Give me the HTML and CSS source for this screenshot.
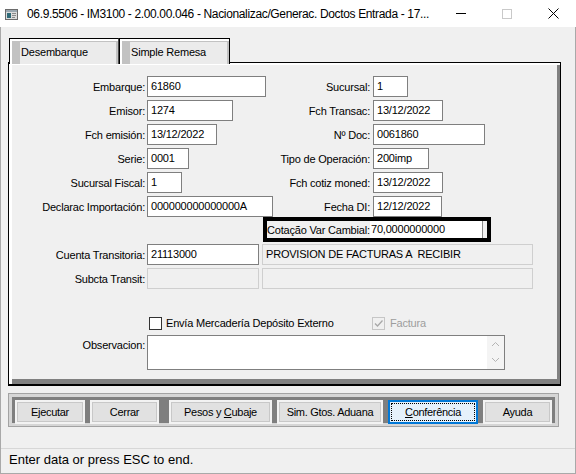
FILE: index.html
```html
<!DOCTYPE html>
<html>
<head>
<meta charset="utf-8">
<link rel="stylesheet" href="styles.css">
</head>
<body>
<div class="window">
  <div class="titlebar">
    <svg class="app-icon" width="13" height="11" viewBox="0 0 13 11">
      <rect x="0.5" y="0.5" width="12" height="10" fill="#dcdcdc" stroke="#6b6b6b"/>
      <rect x="1" y="1" width="11" height="2" fill="#9aa7b0"/>
      <rect x="2" y="4" width="4" height="5" fill="#2e6a78"/>
      <rect x="7" y="4" width="4" height="1" fill="#8a8a8a"/>
      <rect x="7" y="6" width="4" height="1" fill="#8a8a8a"/>
      <rect x="7" y="8" width="3" height="1" fill="#8a8a8a"/>
    </svg>
    <span class="title">06.9.5506 - IM3100 - 2.00.00.046 - Nacionalizac/Generac. Doctos Entrada - 17...</span>
    <div class="controls">
      <span class="ctl"><span class="min-line"></span></span>
      <span class="ctl"><span class="max-box"></span></span>
      <span class="ctl">
        <svg width="11" height="11" viewBox="0 0 11 11"><path d="M0.5 0.5 L10.5 10.5 M10.5 0.5 L0.5 10.5" stroke="#000" stroke-width="1"/></svg>
      </span>
    </div>
  </div>

  <div class="client">
    <div class="tabs">
      <div class="tab"><span>Desembarque</span></div>
      <div class="tab tab-2"><span>Simple Remesa</span></div>
    </div>

    <div class="panel">
      <div class="row">
        <span class="lbl">Embarque:</span>
        <span class="inp w119">61860</span>
        <span class="lbl2">Sucursal:</span>
        <span class="inp w35">1</span>
      </div>
      <div class="row">
        <span class="lbl">Emisor:</span>
        <span class="inp w86">1274</span>
        <span class="lbl2">Fch Transac:</span>
        <span class="inp w70">13/12/2022</span>
      </div>
      <div class="row">
        <span class="lbl">Fch emisión:</span>
        <span class="inp w70">13/12/2022</span>
        <span class="lbl2">Nº Doc:</span>
        <span class="inp w112">0061860</span>
      </div>
      <div class="row">
        <span class="lbl">Serie:</span>
        <span class="inp w42">0001</span>
        <span class="lbl2">Tipo de Operación:</span>
        <span class="inp w56">200imp</span>
      </div>
      <div class="row">
        <span class="lbl">Sucursal Fiscal:</span>
        <span class="inp w35">1</span>
        <span class="lbl2">Fch cotiz moned:</span>
        <span class="inp w70">13/12/2022</span>
      </div>
      <div class="row row-last">
        <span class="lbl">Declarac Importación:</span>
        <span class="inp w126">000000000000000A</span>
        <span class="lbl2">Fecha DI:</span>
        <span class="inp w69">12/12/2022</span>
      </div>
      <div class="row row-cot">
        <div class="cot-box">
          <span class="cot-lbl">Cotação Var Cambial:</span>
          <span class="cot-inp">70,0000000000</span>
        </div>
      </div>
      <div class="row row-cta">
        <span class="lbl">Cuenta Transitoria:</span>
        <span class="inp w112">21113000</span>
        <span class="inp dis w271 wide">PROVISION DE FACTURAS A  RECIBIR</span>
      </div>
      <div class="row">
        <span class="lbl">Subcta Transit:</span>
        <span class="inp dis w112"></span>
        <span class="inp dis w271 wide"></span>
      </div>
      <div class="row row-chk">
        <span class="chk-cell">
          <span class="chk"></span>
          <span class="chk-text">Envía Mercadería Depósito Externo</span>
        </span>
        <span class="chk-cell chk-right">
          <span class="chk chk-dis">
            <svg width="11" height="11" viewBox="0 0 11 11"><path d="M2 5.5 L4.5 8 L9.5 2.5" fill="none" stroke="#a8a8a8" stroke-width="1.3"/></svg>
          </span>
          <span class="chk-text dis-text">Factura</span>
        </span>
      </div>
      <div class="row row-obs">
        <span class="lbl lbl-top">Observacion:</span>
        <div class="memo">
          <div class="memo-text"></div>
          <div class="memo-scroll">
            <svg width="9" height="6" viewBox="0 0 9 6"><path d="M1 5 L4.5 1.5 L8 5" fill="none" stroke="#b4b4b4" stroke-width="1"/></svg>
            <svg width="9" height="6" viewBox="0 0 9 6"><path d="M1 1 L4.5 4.5 L8 1" fill="none" stroke="#b4b4b4" stroke-width="1"/></svg>
          </div>
        </div>
      </div>
    </div>

    <div class="btnbar">
      <button class="btn w70">Ejecutar</button>
      <button class="btn w69">Cerrar</button>
      <button class="btn w103 btn-gap">Pesos y <u>C</u>ubaje</button>
      <button class="btn w106">Sim. Gtos. Aduana</button>
      <button class="btn w90 btn-focus"><span class="focus-ring"><u>C</u>onferência</span></button>
      <button class="btn w69">Ayuda</button>
    </div>

    <div class="status">Enter data or press ESC to end.</div>
  </div>
</div>
</body>
</html>
```
FILE: styles.css
```css
* { box-sizing: border-box; }
html, body { margin: 0; padding: 0; }
body {
  width: 576px;
  height: 474px;
  overflow: hidden;
  background: #f0f0f0;
  font-family: "Liberation Sans", Arial, sans-serif;
}
.window {
  width: 576px;
  height: 474px;
  display: flex;
  flex-direction: column;
}
.titlebar {
  height: 27px;
  background: #fff;
  display: flex;
  align-items: center;
  flex: none;
}
.app-icon { margin-left: 5px; margin-top: 1px; flex: none; }
.title {
  margin-left: 9px;
  font-size: 12px;
  letter-spacing: -0.35px;
  color: #000;
  white-space: nowrap;
  flex: 1;
}
.controls { display: flex; height: 27px; flex: none; }
.ctl {
  width: 46px;
  height: 27px;
  display: flex;
  align-items: center;
  justify-content: center;
}
.min-line { width: 10px; height: 1px; background: #000; }
.max-box { width: 10px; height: 10px; border: 1px solid #c9c9c9; }

.client {
  flex: 1;
  background: #f0f0f0;
  border-left: 1px solid #a9a9a9;
  border-right: 1px solid #a9a9a9;
  border-bottom: 1px solid #a9a9a9;
  display: flex;
  flex-direction: column;
}

/* tabs */
.tabs {
  display: flex;
  margin: 11px 0 0 8px;
  height: 26px;
  position: relative;
  z-index: 1;
}
.tab {
  height: 26px;
  border: 1px solid #000;
  border-bottom: 0;
  border-right-color: #4a4a4a;
  background: #c2c2c2;
  box-shadow: inset 2px 2px 0 #fff;
  padding: 3px 2px 0 10px;
  font-size: 11px;
  letter-spacing: -0.2px;
}
.tab span {
  display: block;
  height: 100%;
  background: #ebebeb;
  line-height: 21px;
  padding-left: 1px;
}
.tab:first-child { width: 110px; }
.tab-2 { width: 111px; margin-left: 0; border-right-color: #000; }

/* panel */
.panel {
  margin: -2px 0 0 7px;
  width: 553px;
  height: 324px;
  flex: none;
  border: 1px solid #000;
  border-bottom-width: 2px;
  box-shadow: inset 3px 2px 0 #fff, inset -3px -5px 0 #808080;
  padding-top: 13px;
  font-size: 11px;
  letter-spacing: -0.2px;
  color: #000;
}
.row {
  display: grid;
  grid-template-columns: 138px 116px 110px auto;
  align-items: center;
  height: 21px;
  margin-bottom: 3px;
  white-space: nowrap;
}
.row-last { margin-bottom: 0; }
.lbl { text-align: right; padding-right: 2px; }
.lbl2 { text-align: right; padding-right: 3px; }
.inp {
  display: block;
  height: 21px;
  line-height: 19px;
  background: #fff;
  border: 1px solid #7f7f7f;
  padding-left: 3px;
  overflow: visible;
  white-space: pre;
}
.dis { background: #f0f0f0; border-color: #cfcfcf; }
.wide { grid-column: 3 / 5; margin-left: -1px; }
.w35 { width: 35px; }
.w42 { width: 42px; }
.w56 { width: 56px; }
.w69 { width: 69px; }
.w70 { width: 70px; }
.w86 { width: 86px; }
.w112 { width: 112px; }
.w119 { width: 119px; }
.w126 { width: 126px; }
.w271 { width: 271px; }

.row-cot { height: 25px; margin-bottom: 2px; }
.cot-box {
  grid-column: 3 / 5;
  display: flex;
  align-items: center;
  width: 228px;
  height: 25px;
  border: 4px solid #000;
  background: #f0f0f0;
}
.cot-lbl { width: 103px; text-align: right; padding-right: 3px; }
.cot-inp {
  width: 113px;
  height: 17px;
  line-height: 17px;
  background: #fff;
  border-right: 1px solid #8a8a8a;
  padding-left: 1px;
}

.row-chk { margin-top: 27px; height: 14px; margin-bottom: 5px; }
.chk-cell {
  grid-column: 2;
  display: flex;
  align-items: center;
  padding-left: 2px;
}
.chk-right { grid-column: 4; margin-left: -1px; padding-left: 0; }
.chk {
  width: 13px;
  height: 13px;
  border: 1px solid #333;
  background: #fff;
  display: flex;
  align-items: center;
  justify-content: center;
  flex: none;
}
.chk-dis { border-color: #c6c6c6; background: #f0f0f0; }
.chk-text { margin-left: 4px; }
.dis-text { color: #9d9d9d; margin-left: 5px; }

.row-obs { height: 35px; align-items: start; }
.lbl-top { padding-top: 4px; }
.memo {
  grid-column: 2 / 5;
  width: 358px;
  height: 35px;
  background: #fff;
  border: 1px solid #7f7f7f;
  display: flex;
}
.memo-text { flex: 1; }
.memo-scroll {
  width: 17px;
  background: #f4f4f4;
  display: flex;
  flex-direction: column;
  align-items: center;
  justify-content: space-between;
  padding: 5px 0 6px;
}

/* button bar */
.btnbar {
  margin: 7px 0 0 7px;
  width: 551px;
  height: 34px;
  flex: none;
  background: #7f7f7f;
  border: 1px solid #a3a3a3;
  box-shadow: inset 0 0 0 3px #d6d6d6;
  display: flex;
  gap: 5px;
  padding: 6px 0 2px 6px;
}
.btn {
  height: 24px;
  background: #e1e1e1;
  border: 2px solid #f3f3f3;
  box-shadow: inset 0 0 0 1px #c8c8c8;
  font-family: "Liberation Sans", Arial, sans-serif;
  font-size: 11px;
  letter-spacing: -0.3px;
  color: #000;
  padding: 0;
  flex: none;
}
.w90 { width: 90px; }
.w103 { width: 103px; }
.w106 { width: 106px; }
.btn-gap { margin-left: 5px; }
.btn-focus {
  background: #e5f1fb;
  border: 1px solid #0078d7;
  box-shadow: inset 0 0 0 1px #0078d7;
  padding: 2px;
}
.focus-ring {
  display: flex;
  align-items: center;
  justify-content: center;
  height: 100%;
  border: 1px dotted #000;
}

.status {
  margin-top: 21px;
  flex: 1;
  border-top: 1px solid #d7d7d7;
  font-size: 13px;
  padding: 3px 0 0 8px;
  color: #000;
}
```
